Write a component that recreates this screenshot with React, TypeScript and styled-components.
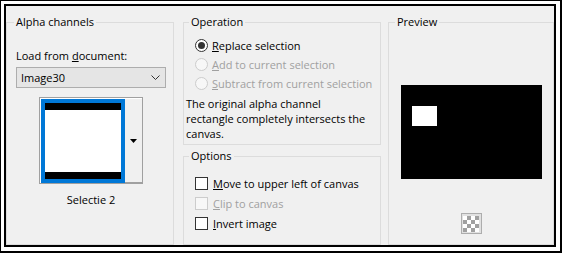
import React from 'react'
import styled, { createGlobalStyle } from 'styled-components'

const GlobalStyle = createGlobalStyle`
  html, body {
    margin: 0;
    padding: 0;
    background: #ffffff;
  }
  body {
    font-family: 'Open Sans', 'Noto Sans', sans-serif;
    font-size: 11px;
    color: #000000;
  }
  * {
    box-sizing: border-box;
  }
`

const OuterFrame = styled.div`
  width: 562px;
  height: 253px;
  border-style: solid;
  border-color: #000000;
  border-width: 1px 2px 2px 1px;
  padding: 3px 4px 4px 3px;
  background: #ffffff;
`

const Dialog = styled.div`
  height: 100%;
  border: 2px solid #000000;
  background: #f0f0f0;
  display: flex;
  align-items: stretch;
`

const Group = styled.fieldset<{ $height?: number; $top?: number }>`
  margin: ${(p) => p.$top ?? 8}px 0 0 0;
  padding: 0;
  min-width: 0;
  border: 1px solid #dcdcdc;
  height: ${(p) => (p.$height ? `${p.$height}px` : 'auto')};
  flex: ${(p) => (p.$height ? '0 0 auto' : '1 1 auto')};
`

const Legend = styled.legend<{ $offset?: number }>`
  margin-left: ${(p) => p.$offset ?? 5}px;
  padding: 0 2px;
  line-height: 16px;
  font-size: 11px;
`

const AlphaColumn = styled.div`
  width: 168px;
  margin-right: 9px;
  display: flex;
  flex-direction: column;
`

const MiddleColumn = styled.div`
  width: 198px;
  margin-right: 7px;
  display: flex;
  flex-direction: column;
`

const PreviewColumn = styled.div`
  flex: 1;
  display: flex;
  flex-direction: column;
`

const AlphaBody = styled.div`
  padding: 18px 7px 0 9px;
  display: flex;
  flex-direction: column;
`

const FieldLabel = styled.div`
  line-height: 16px;
`

const Select = styled.div`
  margin-top: 3px;
  height: 21px;
  border: 1px solid #adadad;
  background: #e5e5e5;
  display: flex;
  align-items: center;
  justify-content: space-between;
  padding: 0 5px 0 4px;
  line-height: 16px;
`

const ThumbFrame = styled.div`
  margin-top: 9px;
  align-self: center;
  width: 104px;
  height: 87px;
  border: 1px solid #a0a0a0;
  background: #ffffff;
  padding: 1px 0 0 1px;
  display: flex;
`

const ThumbImage = styled.div`
  width: 84px;
  height: 84px;
  border: 4px solid #0078d7;
  background: #ffffff;
  display: flex;
  flex-direction: column;
  justify-content: space-between;
`

const ThumbBar = styled.div`
  height: 7px;
  background: #000000;
`

const ThumbArrow = styled.div`
  flex: 1;
  background: #f0f0f0;
  border-bottom: 1px solid #a0a0a0;
  display: flex;
  align-items: center;
  justify-content: center;
`

const Caption = styled.div`
  margin-top: 8px;
  text-align: center;
  line-height: 16px;
`

const OperationBody = styled.div`
  padding: 6px 0 0 0;
`

const ChoiceRow = styled.div<{ $height: number; $disabled?: boolean }>`
  height: ${(p) => p.$height}px;
  display: flex;
  align-items: center;
  padding-left: 11px;
  gap: 4px;
  color: ${(p) => (p.$disabled ? '#a0a0a0' : '#000000')};
  white-space: nowrap;
`

const Radio = styled.span<{ $checked?: boolean; $disabled?: boolean }>`
  width: 13px;
  height: 13px;
  border-radius: 50%;
  border: 1px solid ${(p) => (p.$disabled ? '#cccccc' : '#333333')};
  background: ${(p) => (p.$disabled ? '#f7f7f7' : '#ffffff')};
  display: flex;
  align-items: center;
  justify-content: center;
  flex: 0 0 auto;

  &::after {
    content: '';
    display: ${(p) => (p.$checked ? 'block' : 'none')};
    width: 7px;
    height: 7px;
    border-radius: 50%;
    background: #333333;
  }
`

const CheckBox = styled.span<{ $disabled?: boolean }>`
  width: 13px;
  height: 13px;
  margin-right: 1px;
  border: 1px solid ${(p) => (p.$disabled ? '#cccccc' : '#333333')};
  background: ${(p) => (p.$disabled ? '#f7f7f7' : '#ffffff')};
  flex: 0 0 auto;
`

const Description = styled.div`
  margin-top: 3px;
  padding-left: 2px;
  line-height: 15px;
  white-space: nowrap;
`

const OptionsBody = styled.div`
  padding-top: 9px;
`

const PreviewBody = styled.div`
  padding-top: 55px;
  display: flex;
  flex-direction: column;
  align-items: center;
`

const TransparencyButton = styled.div`
  margin-top: 34px;
  width: 21px;
  height: 21px;
  border: 1px solid #adadad;
  background: #e1e1e1;
  padding: 1px;
  display: flex;
  align-items: center;
  justify-content: center;
`

const Checker = styled.div`
  width: 16px;
  height: 16px;
  background-color: #ffffff;
  background-image: conic-gradient(
    #a0a0a0 0 25%,
    #ffffff 0 50%,
    #a0a0a0 0 75%,
    #ffffff 0
  );
  background-size: 8px 8px;
`

export default function App() {
  return (
    <>
      <GlobalStyle />
      <OuterFrame>
        <Dialog>
          <AlphaColumn>
            <Group>
              <Legend $offset={7}>Alpha channels</Legend>
              <AlphaBody>
                <FieldLabel>
                  Load from <u>d</u>ocument:
                </FieldLabel>
                <Select>
                  <span>Image30</span>
                  <svg width="9" height="5" viewBox="0 0 9 5">
                    <path d="M0.5 0.5 L4.5 4.5 L8.5 0.5" fill="none" stroke="#333" strokeWidth="1" />
                  </svg>
                </Select>
                <ThumbFrame>
                  <ThumbImage>
                    <ThumbBar />
                    <ThumbBar />
                  </ThumbImage>
                  <ThumbArrow>
                    <svg width="7" height="4" viewBox="0 0 7 4">
                      <path d="M0 0 L7 0 L3.5 4 Z" fill="#000" />
                    </svg>
                  </ThumbArrow>
                </ThumbFrame>
                <Caption>Selectie 2</Caption>
              </AlphaBody>
            </Group>
          </AlphaColumn>

          <MiddleColumn>
            <Group $height={131}>
              <Legend>Operation</Legend>
              <OperationBody>
                <ChoiceRow $height={19}>
                  <Radio $checked />
                  <span>
                    <u>R</u>eplace selection
                  </span>
                </ChoiceRow>
                <ChoiceRow $height={19} $disabled>
                  <Radio $disabled />
                  <span>
                    <u>A</u>dd to current selection
                  </span>
                </ChoiceRow>
                <ChoiceRow $height={19} $disabled>
                  <Radio $disabled />
                  <span>
                    <u>S</u>ubtract from current selection
                  </span>
                </ChoiceRow>
                <Description>
                  The original alpha channel
                  <br />
                  rectangle completely intersects the
                  <br />
                  canvas.
                </Description>
              </OperationBody>
            </Group>
            <Group $top={3}>
              <Legend>Options</Legend>
              <OptionsBody>
                <ChoiceRow $height={20}>
                  <CheckBox />
                  <span>
                    <u>M</u>ove to upper left of canvas
                  </span>
                </ChoiceRow>
                <ChoiceRow $height={20} $disabled>
                  <CheckBox $disabled />
                  <span>
                    <u>C</u>lip to canvas
                  </span>
                </ChoiceRow>
                <ChoiceRow $height={20}>
                  <CheckBox />
                  <span>
                    <u>I</u>nvert image
                  </span>
                </ChoiceRow>
              </OptionsBody>
            </Group>
          </MiddleColumn>

          <PreviewColumn>
            <Group>
              <Legend $offset={6}>Preview</Legend>
              <PreviewBody>
                <svg width="141" height="94" viewBox="0 0 141 94">
                  <rect x="0" y="0" width="141" height="94" fill="#000" />
                  <rect x="11" y="21" width="25" height="20" fill="#fff" />
                </svg>
                <TransparencyButton>
                  <Checker />
                </TransparencyButton>
              </PreviewBody>
            </Group>
          </PreviewColumn>
        </Dialog>
      </OuterFrame>
    </>
  )
}
